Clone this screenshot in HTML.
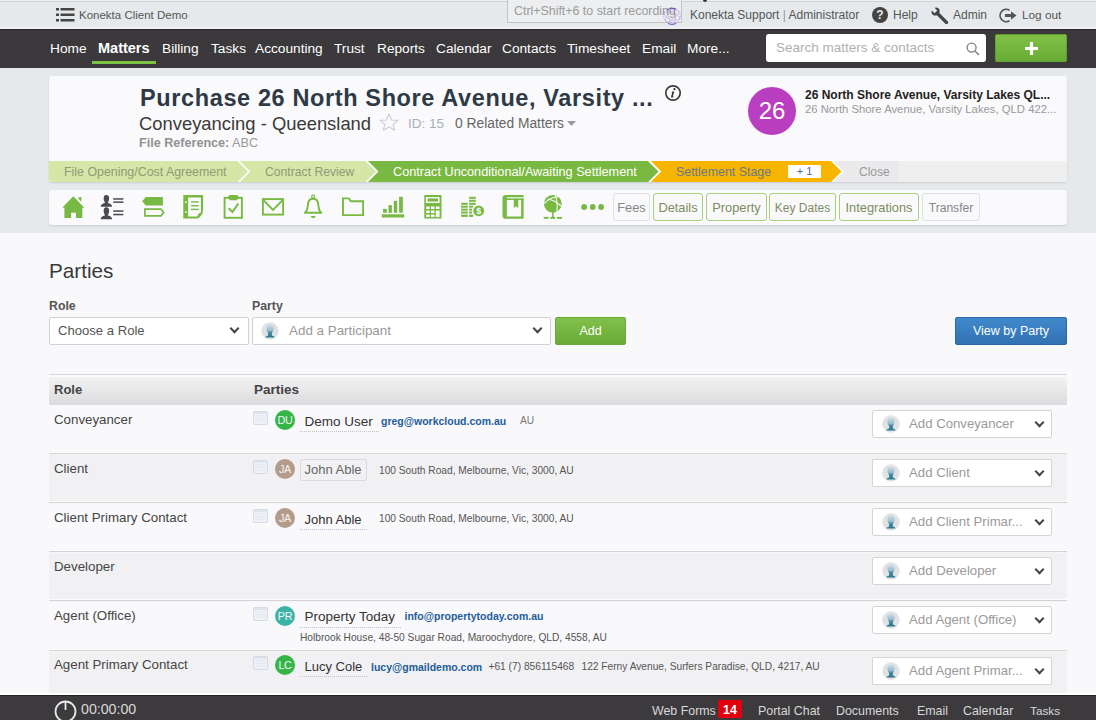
<!DOCTYPE html>
<html><head><meta charset="utf-8">
<style>
*{box-sizing:border-box;margin:0;padding:0}
html,body{width:1096px;height:720px;overflow:hidden;background:#f9f8fa;font-family:"Liberation Sans",sans-serif}
.a{position:absolute;white-space:nowrap}
#top{position:absolute;left:0;top:0;width:1096px;height:29px;background:linear-gradient(#f0f0f1 0,#f0f0f1 1px,#cdd2d5 1px,#cdd2d5 2px,#e6e9ec 2px,#e6e9ec 27px,#eeeff2 27px)}
#nav{position:absolute;left:0;top:29px;width:1096px;height:39px;background:#3b393c;border-top:1px solid #2c2a2d}
#nav .a{color:#fff;font-size:13.7px;top:10.5px}
#band{position:absolute;left:0;top:68px;width:1096px;height:165px;background:#e6e9ec}
.card{position:absolute;background:#faf9fb;border-radius:3px;box-shadow:0 1px 2px rgba(0,0,0,.12)}
#foot{position:absolute;left:0;top:694.5px;width:1096px;height:26px;background:#3c3a3d;border-top:1.5px solid #252326}
#foot .a{color:#d8d8d8;font-size:12.4px;top:8.2px}
.sel{position:absolute;background:#fff;border:1px solid #d2d2d2;border-radius:2px}
.chev{position:absolute;width:7px;height:7px;border-right:2px solid #444;border-bottom:2px solid #444;transform:rotate(45deg)}
.btn{position:absolute;border:1px solid #a9d07a;border-radius:3px;background:#f9f9fb;color:#7d8d60;font-size:12.8px;text-align:center}
.row{position:absolute;left:49px;width:1018px;border-top:2px solid #dcdcdf}
.role{position:absolute;left:5px;color:#454545;font-size:13.3px}
.nb{position:absolute;left:204px;width:15px;height:13px;border:1px solid #c9d3e0;background:linear-gradient(#eef1f6,#dfe5ee);border-radius:1px}
.av{position:absolute;left:226px;width:20px;height:20px;border-radius:50%;color:#f4f4f4;font-size:10.8px;text-align:center;line-height:20px;letter-spacing:-.3px}
.nm{position:absolute;left:255px;color:#333;font-size:13.5px}
.em{position:absolute;color:#235d9a;font-weight:700;font-size:10.5px}
.ad{position:absolute;color:#555;font-size:10.2px}
.addsel{position:absolute;left:823px;width:180px;height:28px;background:#fff;border:1px solid #d5d5d5;border-radius:2px}
.addsel .t{position:absolute;left:36px;top:5px;color:#9a9a9a;font-size:13.2px;white-space:nowrap}
.addsel .i{position:absolute;left:9px;top:4px;width:18px;height:18px}
.addsel .chev{left:163px;top:7.5px;width:7px;height:7px;border-width:2px}
</style></head><body>

<!-- TOP BAR -->
<div id="top">
  <svg class="a" style="left:56px;top:8px" width="19" height="14" viewBox="0 0 19 14"><g fill="#444"><rect x="0" y="0" width="3" height="2.5"/><rect x="4.5" y="0" width="14" height="2.5"/><rect x="0" y="5.5" width="3" height="2.5"/><rect x="4.5" y="5.5" width="14" height="2.5"/><rect x="0" y="11" width="3" height="2.5"/><rect x="4.5" y="11" width="14" height="2.5"/></g></svg>
  <div class="a" style="left:79px;top:9px;font-size:11.5px;color:#555">Konekta Client Demo</div>
  <div class="a" style="left:507px;top:-2px;width:175px;height:25px;border:1px solid #c4c4c4;background:#eceef0"></div>
  <div class="a" style="left:514px;top:4px;font-size:12.4px;color:#9a9a9a">Ctrl+Shift+6 to start recording</div>
  <svg class="a" style="left:663px;top:7px" width="18" height="18" viewBox="0 0 18 18"><g fill="none" stroke="#8a5ad8" stroke-width=".6" stroke-dasharray="1 .8" opacity=".75"><circle cx="9" cy="9" r="8.3"/><ellipse cx="9" cy="9" rx="8" ry="3.5" transform="rotate(20 9 9)"/><ellipse cx="9" cy="9" rx="8" ry="3.5" transform="rotate(80 9 9)"/><ellipse cx="9" cy="9" rx="8" ry="3.5" transform="rotate(140 9 9)"/></g><path d="M4 3 A8.3 8.3 0 0 1 13 2" fill="none" stroke="#3a3ab0" stroke-width="1" opacity=".7"/><path d="M5 16.5 A8.3 8.3 0 0 0 13 16.5" fill="none" stroke="#3a3ab0" stroke-width="1" opacity=".7"/></svg>
  <div class="a" style="left:690px;top:7.8px;font-size:12px;color:#555">Konekta Support <span style="color:#999">|</span> Administrator</div>
  <div class="a" style="left:872px;top:7px;width:16px;height:16px;border-radius:50%;background:#444;color:#e8eaed;font-size:12px;font-weight:700;text-align:center;line-height:16px">?</div>
  <div class="a" style="left:893px;top:7.8px;font-size:12px;color:#555">Help</div>
  <svg class="a" style="left:931px;top:7px" width="18" height="17" viewBox="0 0 18 17"><path d="M6.5 6.5 L15.5 15.5" stroke="#444" stroke-width="3.2" stroke-linecap="round"/><path d="M0.8 3.6 L3.6 6.2 L6.2 3.6 L3.6 0.8 Q6.6 -0.4 8.2 2 Q9.2 4.2 8 6.4 L6.4 8 Q4 9 2 8 Q-0.2 6.4 0.8 3.6 Z" fill="#444"/></svg>
  <div class="a" style="left:953px;top:7.8px;font-size:12px;color:#555">Admin</div>
  <svg class="a" style="left:999px;top:7px" width="19" height="17" viewBox="0 0 19 17"><path d="M10.5 3.2 A6.2 6.2 0 1 0 10.5 13.8" fill="none" stroke="#555" stroke-width="1.7"/><path d="M6 7 H12 V4.2 L17.5 8.5 L12 12.8 V10 H6 Z" fill="#555"/></svg>
  <div class="a" style="left:1022px;top:7.8px;font-size:11.8px;color:#555">Log out</div>
</div>

<div class="a" style="left:703px;top:0;width:3.5px;height:1.5px;background:#333;border-radius:0 0 2px 2px"></div>
<!-- NAV -->
<div id="nav">
  <div class="a" style="left:50px">Home</div>
  <div class="a" style="left:98px;font-weight:700;font-size:14.5px;top:10.2px">Matters</div>
  <div class="a" style="left:92px;top:30.5px;width:64px;height:3px;background:#7cc142"></div>
  <div class="a" style="left:162px">Billing</div>
  <div class="a" style="left:211px">Tasks</div>
  <div class="a" style="left:255px">Accounting</div>
  <div class="a" style="left:334px">Trust</div>
  <div class="a" style="left:377px">Reports</div>
  <div class="a" style="left:436px">Calendar</div>
  <div class="a" style="left:502px">Contacts</div>
  <div class="a" style="left:567px">Timesheet</div>
  <div class="a" style="left:642px">Email</div>
  <div class="a" style="left:687px">More...</div>
  <div class="a" style="left:766px;top:4px;width:220px;height:28px;background:#fff;border-radius:3px"></div>
  <div class="a" style="left:776px;top:9.6px;color:#b0b0b0;font-size:13.5px">Search matters &amp; contacts</div>
  <svg class="a" style="left:966px;top:12px" width="14" height="14" viewBox="0 0 15 15"><circle cx="6" cy="6" r="4.8" fill="none" stroke="#888" stroke-width="1.5"/><path d="M9.6 9.6 L13.8 13.8" stroke="#888" stroke-width="1.7"/></svg>
  <div class="a" style="left:995px;top:4px;width:72px;height:28px;background:linear-gradient(#80c047,#68ab34);border-radius:2px;border:1px dotted #4f8a26"></div>
  <svg class="a" style="left:1025px;top:11.5px" width="13" height="13" viewBox="0 0 14 14"><path d="M5.3 0H8.7V5.3H14V8.7H8.7V14H5.3V8.7H0V5.3H5.3Z" fill="#fff"/></svg>
</div>

<!-- HEADER BAND -->
<div id="band">
  <div class="card" style="left:49px;top:8px;width:1018px;height:106px;overflow:hidden">
    <div class="a" style="left:91px;top:9px;font-size:23.5px;font-weight:700;color:#2e3a46;letter-spacing:.62px">Purchase 26 North Shore Avenue, Varsity ...</div>
    <svg class="a" style="left:615px;top:8px" width="18" height="18" viewBox="0 0 18 18"><circle cx="9" cy="9" r="7.2" fill="none" stroke="#3e3e3e" stroke-width="1.7"/><circle cx="10.4" cy="5.2" r="1.1" fill="#333"/><path d="M8.4 7.6 H10.3 L8.9 12 Q8.7 12.8 9.6 12.4 L9.8 12.7 Q8.4 13.8 7.5 13.5 Q6.9 13.2 7.2 12.2 L8.2 8.6 H7.6 Z" fill="#333"/></svg>
    <div class="a" style="left:90px;top:36.5px;font-size:18.4px;color:#3a3a3a">Conveyancing - Queensland</div>
    <svg class="a" style="left:330px;top:37px" width="20" height="18" viewBox="0 0 20 18"><path d="M10 1 L12.6 7 L19 7.4 L14.1 11.4 L15.8 17.2 L10 13.9 L4.2 17.2 L5.9 11.4 L1 7.4 L7.4 7 Z" fill="none" stroke="#cdcdd2" stroke-width="1.1" stroke-linejoin="round"/></svg>
    <div class="a" style="left:359px;top:40px;font-size:13.5px;color:#a8b0b8">ID: 15</div>
    <div class="a" style="left:406px;top:40px;font-size:13.8px;color:#666">0 Related Matters</div>
    <svg class="a" style="left:518px;top:44.5px" width="9" height="5" viewBox="0 0 9 5"><path d="M0 0H9L4.5 5Z" fill="#999"/></svg>
    <div class="a" style="left:90px;top:60px;font-size:12.6px;color:#8a8a8a"><b style="color:#929292">File Reference:</b> <span style="color:#999">ABC</span></div>
    <div class="a" style="left:699px;top:10.5px;width:48px;height:48px;border-radius:50%;background:#b93fc0;color:#fff;font-size:24px;text-align:center;line-height:48px">26</div>
    <div class="a" style="left:756px;top:11.5px;font-size:12px;font-weight:700;color:#222">26 North Shore Avenue, Varsity Lakes QL...</div>
    <div class="a" style="left:756px;top:26.5px;font-size:11.3px;color:#9a9a9a">26 North Shore Avenue, Varsity Lakes, QLD 422...</div>
    <!-- stage bar -->
    <div class="a" style="left:0;top:85px;width:1018px;height:21px;background:#fdfdfd"></div>
    
    <svg class="a" style="left:0;top:85px" width="1018" height="21" viewBox="0 0 1018 21">
      <path d="M784.5 0H1018V21H784.5L795 10.5Z" fill="#eaeaec"/><path d="M850 0H1018V21H850Z" fill="#efeff0"/>
      <path d="M0 0H188.5L199 10.5L188.5 21H0Z" fill="#d5e7a7"/>
      <path d="M190.8 0H316.5L327 10.5L316.5 21H190.8L201.3 10.5Z" fill="#d5e7a7"/>
      <path d="M319 0H599L609.5 10.5L599 21H319L329.5 10.5Z" fill="#7ab941"/>
      <path d="M601.8 0H782L792.5 10.5L782 21H601.8L612.3 10.5Z" fill="#f7b500"/>
    </svg>
    <div class="a" style="left:15px;top:89px;font-size:12.4px;color:#8e9a78">File Opening/Cost Agreement</div>
    <div class="a" style="left:216px;top:89px;font-size:12.2px;color:#8e9a78">Contract Review</div>
    <div class="a" style="left:344px;top:89px;font-size:12.7px;color:#fff">Contract Unconditional/Awaiting Settlement</div>
    <div class="a" style="left:627px;top:89px;font-size:12.4px;color:#6b7888">Settlement Stage</div>
    <div class="a" style="left:739px;top:89px;width:33px;height:13px;background:#fff;border-radius:1px;color:#4a6b96;font-size:11px;text-align:center;line-height:13px">+ 1</div>
    <div class="a" style="left:810px;top:89px;font-size:12px;color:#999">Close</div>
  </div>
  <div class="card" style="left:49px;top:122px;width:1018px;height:35px">
    <svg class="a" style="left:0;top:0" width="1018" height="35" viewBox="49 190 1018 35">
<g fill="#78b943">
 <path d="M73.3 196.2 L84.4 207.8 L82.3 207.8 L82.3 218 L75.9 218 L75.9 212.8 L71.1 212.8 L71.1 218 L64.4 218 L64.4 207.8 L62.3 207.8 Z"/>
 <path d="M78.4 197.6 L81.4 197 L81.4 201.8 L78.4 198.8 Z"/>
</g>
<g fill="#4b4b4d">
 <path id="bust" d="M106.4 194.9 C108.7 194.9 109.3 197 109.1 199 C108.9 200.7 108.3 201.7 107.9 202.5 L107.9 203.1 Q111.8 203.6 112.1 206.8 H100.7 Q101 203.6 104.9 203.1 L104.9 202.5 C104.5 201.7 103.9 200.7 103.7 199 C103.5 197 104.1 194.9 106.4 194.9 Z"/>
 <path d="M106.4 207.3 C108.7 207.3 109.3 209.4 109.1 211.4 C108.9 213.1 108.3 214.1 107.9 214.9 L107.9 215.5 Q111.8 216 112.1 219.2 H100.7 Q101 216 104.9 215.5 L104.9 214.9 C104.5 214.1 103.9 213.1 103.7 211.4 C103.5 209.4 104.1 207.3 106.4 207.3 Z"/>
 <rect x="113.2" y="198.2" width="10.2" height="1.5"/><rect x="113.2" y="201.4" width="10.2" height="1.5"/>
 <rect x="113.2" y="210.3" width="10.2" height="1.5"/><rect x="113.2" y="213.8" width="10.2" height="1.5"/>
</g>
<g fill="#78b943">
 <path d="M145.7 197.1 H162.9 V205.5 H145.7 L142.2 201.3 Z"/>
 <path d="M144.9 209.1 H161 L163.6 212.4 L161 215.8 H144.9 Z" fill="none" stroke="#78b943" stroke-width="1.7"/>
 <path fill-rule="evenodd" d="M183.3 194.9 H203.1 V210 Q202.5 216.5 197.4 218.5 H183.3 Z M188.1 197.4 V216.6 H197 L200.9 212.6 V197.4 Z"/>
 <path d="M197.4 216.6 Q198 213 200.9 212.6 Z"/>
 <circle cx="185.9" cy="202.2" r="0.9" fill="#fff"/><circle cx="185.9" cy="212.1" r="0.9" fill="#fff"/>
 <rect x="191" y="201.2" width="7.7" height="1.4"/><rect x="191" y="205" width="7.7" height="1.4"/><rect x="191" y="208.7" width="7.7" height="1.4"/>
</g>
<g fill="none" stroke="#78b943" stroke-width="1.9">
 <rect x="224.6" y="197.8" width="17.3" height="20"/>
 <path d="M228.6 208.3 L232.4 212 L238.4 203.6"/>
 <rect x="262.9" y="199.1" width="20.2" height="15.5"/>
 <path d="M262.9 199.6 L273 210 L283.1 199.6"/>
 <path stroke-linejoin="round" d="M304.8 212.8 Q307.2 211.4 307.6 207 L308 203.8 Q308.6 198.8 313.1 198.8 Q317.6 198.8 318.2 203.8 L318.6 207 Q319 211.4 321.4 212.8 Z"/>
 <path d="M343 198.4 H348.8 L350.9 201.2 H363.1 V215.1 H343 Z"/>
</g>
<g fill="#78b943">
 <path d="M228 197.8 Q228 194.9 230.5 194.9 H236.3 Q238.8 194.9 238.8 197.8 L236.8 200.3 H229.8 Z"/>
 <circle cx="313.1" cy="196.6" r="1.5" fill="none" stroke="#78b943" stroke-width="1.1"/>
 <path d="M310.8 216.1 H315.6 Q315.4 218.2 313.2 218.2 Q311 218.2 310.8 216.1 Z"/>
 <rect x="383.1" y="208.9" width="3.7" height="3.9"/><rect x="388.5" y="205.1" width="3.4" height="7.7"/>
 <rect x="393.8" y="200.9" width="3.4" height="11.9"/><rect x="399.1" y="196.8" width="3.7" height="16"/>
 <rect x="381.8" y="214.3" width="22.4" height="3.2"/>
 <path fill-rule="evenodd" d="M424.3 194.9 H441.5 V218.5 H424.3 Z M425.9 197.1 H439.6 V202.9 H425.9 Z M426.2 206.4 H429.7 V208.9 H426.2 Z M431 206.4 H434.5 V208.9 H431 Z M435.8 206.4 H439.6 V208.9 H435.8 Z M426.2 210.5 H429.7 V213.1 H426.2 Z M431 210.5 H434.5 V213.1 H431 Z M435.8 210.5 H439.6 V216.9 H435.8 Z M426.2 214.4 H429.7 V216.9 H426.2 Z M431 214.4 H434.5 V216.9 H431 Z"/>
 <rect x="427.5" y="198.4" width="10.5" height="3.2"/>
 <g><rect x="461.1" y="202.8" width="6.7" height="2"/><rect x="461.1" y="205.7" width="6.7" height="2"/><rect x="461.1" y="208.6" width="6.7" height="2"/><rect x="461.1" y="211.5" width="6.7" height="2"/><rect x="461.1" y="214.6" width="6.7" height="2.3"/>
 <rect x="469.1" y="196.8" width="6.7" height="2"/><rect x="469.1" y="199.8" width="6.7" height="2"/><rect x="469.1" y="202.8" width="6.7" height="2"/><rect x="469.1" y="205.7" width="4" height="2"/><rect x="469.1" y="208.6" width="3" height="2"/><rect x="469.1" y="211.5" width="3" height="2"/><rect x="469.1" y="214.6" width="4" height="2.3"/></g>
 <circle cx="478.7" cy="210.8" r="6.6" fill="#f9f9fb"/>
 <circle cx="478.7" cy="210.8" r="5.4"/>
 <path fill-rule="evenodd" d="M502.5 198 Q502.5 194.9 505.6 194.9 H523.6 V218.8 H505.6 Q502.5 218.8 502.5 215.7 Z M506.8 200 H521.1 V216.6 H506.8 Z"/>
 <path d="M506.8 197.2 H523.6 V198.6 H506.8 Z" fill="#f9f9fb"/>
 <path d="M506.8 198.6 H511.2 V200 H506.8 Z M519.9 198.6 H523.6 V200 H519.9 Z"/>
 <path d="M513.8 198.6 H518.3 V208 L516 206.2 L513.8 208 Z"/>
 <circle cx="552.8" cy="203.8" r="8.9"/>
 <rect x="552.1" y="212" width="1.5" height="5"/>
 <rect x="543.7" y="216.9" width="5" height="1.9"/><rect x="550.3" y="216.9" width="5" height="1.9"/><rect x="556.9" y="216.9" width="5.1" height="1.9"/>
 <circle cx="584.1" cy="207" r="2.9"/><circle cx="592.7" cy="207" r="2.9"/><circle cx="601.1" cy="207" r="2.9"/>
</g>
<text x="478.7" y="214.3" font-family="Liberation Sans" font-weight="700" font-size="9" fill="#fff" text-anchor="middle">$</text>
<g fill="none" stroke="#f9f9fb" stroke-width="1.1">
 <path d="M544.2 203.5 Q551 196.5 559.5 196.8"/>
 <path d="M547.5 199 Q555.5 200.5 561.2 206"/>
 <path d="M555.3 195.6 Q558.2 203 556.8 212"/>
</g>
</svg>
    <div class="btn" style="left:564px;top:3px;width:37px;height:28px;border-color:#e2e2e4;color:#888;line-height:28px">Fees</div>
    <div class="btn" style="left:604px;top:3px;width:50px;height:28px;line-height:28px">Details</div>
    <div class="btn" style="left:657px;top:3px;width:61px;height:28px;line-height:28px">Property</div>
    <div class="btn" style="left:720px;top:3px;width:67px;height:28px;line-height:28px;font-size:12px">Key Dates</div>
    <div class="btn" style="left:790px;top:3px;width:80px;height:28px;line-height:28px">Integrations</div>
    <div class="btn" style="left:873px;top:3px;width:58px;height:28px;border-color:#e2e2e4;color:#888;line-height:28px;font-size:12.1px">Transfer</div>
  </div>
</div>

<!-- PARTIES -->
<div class="a" style="left:49px;top:259px;font-size:20.7px;color:#3a3a3a">Parties</div>
<div class="a" style="left:49px;top:299px;font-size:12.3px;font-weight:700;color:#555">Role</div>
<div class="a" style="left:252px;top:299px;font-size:12.3px;font-weight:700;color:#555">Party</div>
<div class="sel" style="left:49px;top:317px;width:200px;height:28px"></div>
<div class="a" style="left:58px;top:323px;font-size:13.1px;color:#555">Choose a Role</div>
<div class="chev" style="left:231px;top:325px"></div>
<div class="sel" style="left:252px;top:317px;width:299px;height:28px"></div>
<svg class="a" style="left:261px;top:322px" width="18" height="18" viewBox="0 0 18 18"><use href="#person"/></svg>
<div class="a" style="left:289px;top:323px;font-size:13.4px;color:#999">Add a Participant</div>
<div class="chev" style="left:534px;top:325px"></div>
<div class="a" style="left:555px;top:317px;width:71px;height:28px;background:linear-gradient(#82c04b,#68aa35);border:1px solid #6aa83a;border-radius:2px;color:#fff;font-size:12.5px;text-align:center;line-height:26px">Add</div>
<div class="a" style="left:955px;top:317px;width:112px;height:28px;background:linear-gradient(#4189cc,#3072b2);border:1px solid #2c68a6;border-radius:2px;color:#fff;font-size:12.5px;text-align:center;line-height:26px">View by Party</div>

<!-- TABLE -->
<div class="a" style="left:49px;top:374px;width:1018px;height:31px;background:linear-gradient(#d6d6d8 0,#d6d6d8 1.2px,#fbfbfc 1.2px,#fbfbfc 2.8px,#f2f2f3 2.8px,#dcdcde 100%)"></div>
<div class="a" style="left:54px;top:382px;font-size:13px;font-weight:700;color:#444">Role</div>
<div class="a" style="left:254px;top:382px;font-size:13.5px;font-weight:700;color:#444">Parties</div>

<svg width="0" height="0" style="position:absolute"><defs>
<linearGradient id="pg" x1="0" y1="0" x2="0" y2="1"><stop offset="0" stop-color="#cddde8"/><stop offset=".45" stop-color="#98bccd"/><stop offset=".62" stop-color="#3f8aa2"/><stop offset="1" stop-color="#2c768e"/></linearGradient>
<symbol id="person" viewBox="0 0 18 18"><circle cx="9" cy="9" r="8.5" fill="#e0e1e3" stroke="#ececee" stroke-width="1"/><path d="M9 2.8 C11.8 2.8 12.9 4.8 12.6 7.2 C12.4 8.8 11.6 10 10.9 10.8 L10.9 13.6 Q13.4 14.2 13.6 15.4 H4.4 Q4.6 14.2 7.1 13.6 L7.1 10.8 C6.4 10 5.6 8.8 5.4 7.2 C5.1 4.8 6.2 2.8 9 2.8 Z" fill="url(#pg)"/></symbol>
<symbol id="notepad" viewBox="0 0 15 14"><rect x=".5" y=".5" width="14" height="13" rx="1" fill="#eef2f7" stroke="#d3dbe6"/><rect x="1" y="1" width="13" height="1.8" fill="#dde4ee"/><g fill="#e2e8f0"><rect x="2" y="4.5" width="11" height="1"/><rect x="2" y="7" width="11" height="1"/><rect x="2" y="9.5" width="11" height="1"/></g></symbol>
</defs></svg>
<div class="a" style="left:49px;top:454px;width:1018px;height:47px;background:#f1f1f3"></div>
<div class="a" style="left:49px;top:552px;width:1018px;height:47px;background:#f1f1f3"></div>
<div class="a" style="left:49px;top:651px;width:1018px;height:42px;background:#f1f1f3"></div>
<div class="a" style="left:49px;top:452px;width:1018px;height:3px;background:linear-gradient(#fdfdfe 0,#fdfdfe .8px,#d3d3d5 .8px,#d3d3d5 2px,#f6f6f7 2px)"></div>
<div class="a" style="left:49px;top:501px;width:1018px;height:3px;background:linear-gradient(#fdfdfe 0,#fdfdfe .8px,#d3d3d5 .8px,#d3d3d5 2px,#f6f6f7 2px)"></div>
<div class="a" style="left:49px;top:550px;width:1018px;height:3px;background:linear-gradient(#fdfdfe 0,#fdfdfe .8px,#d3d3d5 .8px,#d3d3d5 2px,#f6f6f7 2px)"></div>
<div class="a" style="left:49px;top:599px;width:1018px;height:3px;background:linear-gradient(#fdfdfe 0,#fdfdfe .8px,#d3d3d5 .8px,#d3d3d5 2px,#f6f6f7 2px)"></div>
<div class="a" style="left:49px;top:649px;width:1018px;height:3px;background:linear-gradient(#fdfdfe 0,#fdfdfe .8px,#d3d3d5 .8px,#d3d3d5 2px,#f6f6f7 2px)"></div>
<div class="a role" style="left:54px;top:411.5px">Conveyancer</div>
<div class="addsel" style="top:410px;left:872px"><svg class="i" viewBox="0 0 18 18"><use href="#person"/></svg><span class="t">Add Conveyancer</span><div class="chev"></div></div>
<div class="a role" style="left:54px;top:460.5px">Client</div>
<div class="addsel" style="top:459px;left:872px"><svg class="i" viewBox="0 0 18 18"><use href="#person"/></svg><span class="t">Add Client</span><div class="chev"></div></div>
<div class="a role" style="left:54px;top:509.5px">Client Primary Contact</div>
<div class="addsel" style="top:508px;left:872px"><svg class="i" viewBox="0 0 18 18"><use href="#person"/></svg><span class="t">Add Client Primar...</span><div class="chev"></div></div>
<div class="a role" style="left:54px;top:558.5px">Developer</div>
<div class="addsel" style="top:557px;left:872px"><svg class="i" viewBox="0 0 18 18"><use href="#person"/></svg><span class="t">Add Developer</span><div class="chev"></div></div>
<div class="a role" style="left:54px;top:607.5px">Agent (Office)</div>
<div class="addsel" style="top:606px;left:872px"><svg class="i" viewBox="0 0 18 18"><use href="#person"/></svg><span class="t">Add Agent (Office)</span><div class="chev"></div></div>
<div class="a role" style="left:54px;top:656.5px">Agent Primary Contact</div>
<div class="addsel" style="top:657px;left:872px"><svg class="i" viewBox="0 0 18 18"><use href="#person"/></svg><span class="t">Add Agent Primar...</span><div class="chev"></div></div>
<svg class="a" style="left:253px;top:411px" width="15" height="14"><use href="#notepad"/></svg>
<div class="a av" style="left:275px;top:410px;background:#33b548">DU</div>
<div class="a nm" style="left:304.5px;top:413.5px">Demo User</div>
<div class="a" style="left:300px;top:431px;width:79px;border-top:1px dotted #c4c4c4"></div>
<div class="a em" style="left:381px;top:414.5px">greg@workcloud.com.au</div>
<div class="a ad" style="left:520px;top:415px;color:#777">AU</div>
<svg class="a" style="left:253px;top:460px" width="15" height="14"><use href="#notepad"/></svg>
<div class="a av" style="left:275px;top:459px;background:#b49c8a">JA</div>
<div class="a" style="left:300px;top:459px;width:67px;height:22px;border:1px solid #dadada;border-radius:2px"></div>
<div class="a nm" style="left:304.5px;top:462px;color:#666;font-size:13px">John Able</div>
<div class="a ad" style="left:379px;top:464.5px">100 South Road, Melbourne, Vic, 3000, AU</div>
<svg class="a" style="left:253px;top:509px" width="15" height="14"><use href="#notepad"/></svg>
<div class="a av" style="left:275px;top:508px;background:#b49c8a">JA</div>
<div class="a nm" style="left:304.5px;top:511.5px;font-size:13px">John Able</div>
<div class="a" style="left:300px;top:529px;width:67px;border-top:1px dotted #c4c4c4"></div>
<div class="a ad" style="left:379px;top:513px">100 South Road, Melbourne, Vic, 3000, AU</div>
<svg class="a" style="left:253px;top:607px" width="15" height="14"><use href="#notepad"/></svg>
<div class="a av" style="left:275px;top:606px;background:#3db3a6">PR</div>
<div class="a nm" style="left:304.5px;top:608.5px">Property Today</div>
<div class="a" style="left:300px;top:627px;width:101px;border-top:1px dotted #c4c4c4"></div>
<div class="a em" style="left:404.5px;top:610px">info@propertytoday.com.au</div>
<div class="a ad" style="left:300px;top:632px">Holbrook House, 48-50 Sugar Road, Maroochydore, QLD, 4558, AU</div>
<svg class="a" style="left:253px;top:656px" width="15" height="14"><use href="#notepad"/></svg>
<div class="a av" style="left:275px;top:655px;background:#33b548">LC</div>
<div class="a nm" style="left:304.5px;top:659px;font-size:13px">Lucy Cole</div>
<div class="a" style="left:300px;top:676px;width:67px;border-top:1px dotted #c4c4c4"></div>
<div class="a em" style="left:371px;top:660.5px">lucy@gmaildemo.com</div>
<div class="a ad" style="left:488.5px;top:661px">+61 (7) 856115468</div>
<div class="a ad" style="left:581.5px;top:661px">122 Ferny Avenue, Surfers Paradise, QLD, 4217, AU</div>

<!-- FOOTER -->
<div class="a" style="left:0;top:692.5px;width:1096px;height:2px;background:#fff"></div>
<div id="foot">
  <svg class="a" style="left:54px;top:4px" width="23" height="23" viewBox="0 0 23 23"><circle cx="11.5" cy="11.5" r="10" fill="none" stroke="#e8e8e8" stroke-width="1.8"/><path d="M11.5 1.5V10" stroke="#e8e8e8" stroke-width="1.8"/></svg>
  <div class="a" style="left:81px;top:5.5px;font-size:14.2px">00:00:00</div>
  <div class="a" style="left:652px">Web Forms</div>
  <div class="a" style="left:718px;top:4px;width:24px;height:18px;background:#e0000e;color:#fff;font-size:12.5px;font-weight:700;text-align:center;line-height:20.5px">14</div>
  <div class="a" style="left:758px">Portal Chat</div>
  <div class="a" style="left:836px">Documents</div>
  <div class="a" style="left:917px">Email</div>
  <div class="a" style="left:963px">Calendar</div>
  <div class="a" style="left:1030px;font-size:11.8px;top:8.2px">Tasks</div>
</div>
</body></html>
